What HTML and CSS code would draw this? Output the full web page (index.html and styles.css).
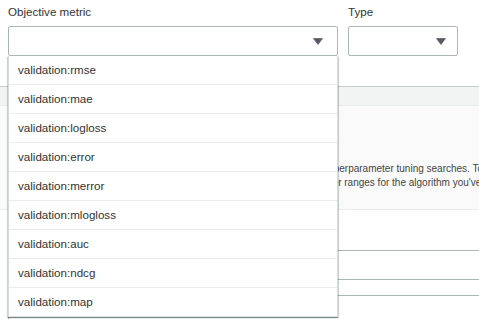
FILE: index.html
```html
<!DOCTYPE html>
<html lang="en">
<head>
  <meta charset="UTF-8">
  <title>Objective metric</title>
  <link rel="stylesheet" href="styles.css">
</head>
<body>
<div class="form-row">
  <div class="field field-metric">
    <label class="field-label">Objective metric</label>
    <div class="select-wrap">
      <div class="select">
        <svg class="caret" width="10" height="7" viewBox="0 0 10 7"><path d="M0.6 0.6h8.8l-4.4 5.8z" fill="#545b64" stroke="#545b64" stroke-width="0.8" stroke-linejoin="round"/></svg>
      </div>
      <ul class="dropdown">
        <li>validation:rmse</li>
        <li>validation:mae</li>
        <li>validation:logloss</li>
        <li>validation:error</li>
        <li>validation:merror</li>
        <li>validation:mlogloss</li>
        <li>validation:auc</li>
        <li>validation:ndcg</li>
        <li>validation:map</li>
      </ul>
    </div>
  </div>
  <div class="field field-type">
    <label class="field-label">Type</label>
    <div class="select select-small">
      <svg class="caret" width="10" height="7" viewBox="0 0 10 7"><path d="M0.6 0.6h8.8l-4.4 5.8z" fill="#545b64" stroke="#545b64" stroke-width="0.8" stroke-linejoin="round"/></svg>
    </div>
  </div>
</div>

<div class="section">
  <div class="section-header"></div>
  <div class="section-body">
    <p class="hint">
      <span class="hint-line">Choose the objective metric that you want to optimize during hyperparameter tuning searches. To learn more,</span>
      <span class="hint-line">For a list of metrics and the available default and hyperparameter ranges for the algorithm you've chosen, see the documentation.</span>
    </p>
  </div>
  <div class="ranges">
    <div class="range-input"></div>
    <div class="range-input"></div>
  </div>
</div>
</body>
</html>
```

FILE: styles.css
```css
html, body {
  margin: 0;
  height: 100%;
  overflow: hidden;
  background-color: #ffffff;
  color: #333333;
  font-family: "Liberation Sans", Arial, sans-serif;
}

/* Top row with the two selects */
.form-row {
  display: flex;
  gap: 10px;
  height: 82px;
  padding: 4px 0 0 8px;
}

.field-label {
  display: block;
  font-size: 11.6px;
  line-height: 16px;
  margin-bottom: 6px;
  color: #333333;
}

.field-metric {
  width: 330px;
}

.field-type {
  width: 110px;
}

.select-wrap {
  position: relative;
}

.select {
  height: 30px;
  box-sizing: border-box;
  border: 1px solid #aab7b8;
  border-radius: 2px;
  display: flex;
  align-items: center;
  justify-content: flex-end;
  padding-right: 14px;
  background-color: #ffffff;
}

.select-small {
  padding-right: 11px;
}

.caret {
  display: block;
}

/* Options list that opens over the page */
.dropdown {
  position: absolute;
  top: 30px;
  left: 0;
  right: 0;
  z-index: 5;
  margin: 0;
  padding: 0;
  list-style: none;
  background-color: #ffffff;
  border: 1px solid #d5dbdb;
  border-top: none;
  box-shadow: 0 1px 1px 0 rgba(0, 28, 36, 0.3), 1px 1px 1px 0 rgba(0, 28, 36, 0.15), -1px 1px 1px 0 rgba(0, 28, 36, 0.15);
}

.dropdown li {
  height: 28px;
  line-height: 28px;
  padding-left: 9px;
  font-size: 11.6px;
  color: #333333;
  border-bottom: 1px solid #eaeded;
}

.dropdown li:last-child {
  border-bottom: none;
}

/* Section underneath the form */
.section-header {
  height: 18px;
  background-color: #f2f3f3;
  border-top: 1px solid #c6cccc;
  border-bottom: 1px solid #eaeded;
}

.section-body {
  background-color: #fafafa;
  border-bottom: 1px solid #eaeded;
  padding: 56px 0 19px 53px;
}

.hint {
  margin: 0;
  font-size: 10px;
  line-height: 14px;
  color: #444444;
  white-space: nowrap;
}

.hint-line {
  display: block;
}

.ranges {
  padding: 40px 0 0 8px;
  display: flex;
  flex-direction: column;
  gap: 15px;
}

.range-input {
  height: 30px;
  box-sizing: border-box;
  border: 1px solid #aab7b8;
  border-right: none;
  border-radius: 2px 0 0 2px;
}
```
